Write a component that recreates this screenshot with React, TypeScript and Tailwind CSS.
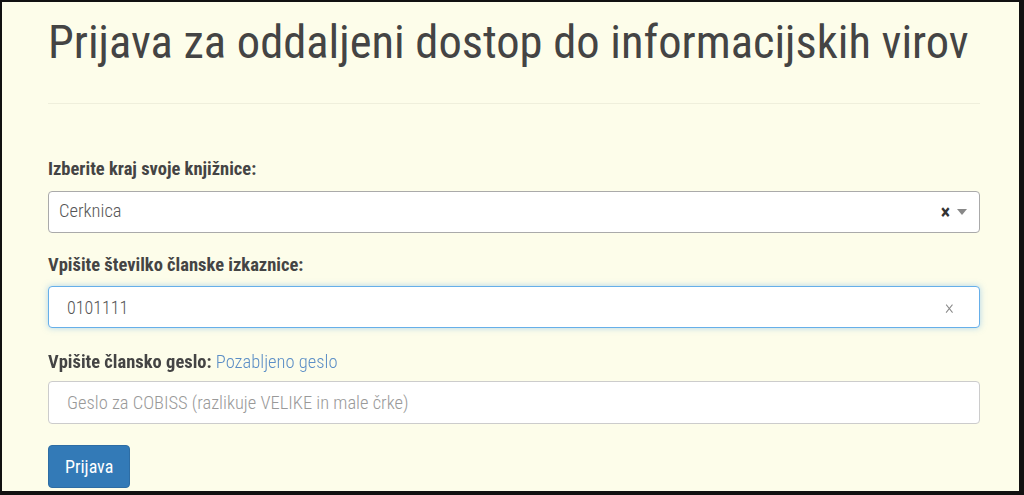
import { useState } from 'react';

const font = { fontFamily: '"Roboto Condensed", Roboto, "Liberation Sans", sans-serif' };

export default function App() {
  const [card, setCard] = useState('0101111');
  const [geslo, setGeslo] = useState('');

  return (
    <div
      className="w-[1024px] h-[495px] overflow-hidden bg-[#fdfdea] border-l-2 border-t-2 border-r-[5px] border-b-4 border-[#111] text-[#444]"
      style={font}
    >
      <div className="w-[932px] ml-[46px]">
        <h1 className="text-[46.5px] leading-[52px] pt-[14px] font-normal text-[#444] whitespace-nowrap">
          Prijava za oddaljeni dostop do informacijskih virov
        </h1>
        <hr className="mt-[35px] border-0 border-t border-[#efefdc]" />

        <form className="mt-[54px]" onSubmit={(e) => e.preventDefault()}>
          <label className="block text-[18.5px] leading-[22px] font-bold text-[#444]">Izberite kraj svoje knjižnice:</label>
          <div className="mt-[11px] h-[42px] flex items-center bg-white border border-[#aaa] rounded-[4px] pl-[10px] pr-[12px]">
            <span className="flex-1 text-[18.5px] text-[#555] font-light">Cerknica</span>
            <span className="text-[20px] font-bold text-[#333] leading-none">×</span>
            <span className="ml-[7px] w-0 h-0 border-l-[5px] border-r-[5px] border-t-[6px] border-l-transparent border-r-transparent border-t-[#888]" />
          </div>

          <label className="block mt-[21px] text-[18.5px] leading-[22px] font-bold text-[#444]">Vpišite številko članske izkaznice:</label>
          <div className="mt-[10px] h-[42px] flex items-center bg-white border border-[#66afe9] rounded-[4px] shadow-[0_0_6px_rgba(102,175,233,0.5)] pl-[18px] pr-[25px]">
            <input
              autoFocus
              value={card}
              onChange={(e) => setCard(e.target.value)}
              className="flex-1 bg-transparent outline-none text-[18px] text-[#555] font-light caret-black"
              style={font}
            />
            <span className="text-[#888] text-[20px] font-light leading-none">×</span>
          </div>

          <label className="block mt-[23px] text-[18.5px] leading-[22px] text-[#444]">
            <span className="font-bold">Vpišite člansko geslo:</span>{' '}
            <a href="#" className="text-[#5b8ec6] font-light">Pozabljeno geslo</a>
          </label>
          <input
            type="password"
            value={geslo}
            onChange={(e) => setGeslo(e.target.value)}
            placeholder="Geslo za COBISS (razlikuje VELIKE in male črke)"
            className="mt-[8px] block w-full h-[43px] bg-white border border-[#ccc] rounded-[4px] pl-[18px] text-[18.5px] text-[#555] font-light outline-none placeholder:text-[#999]"
            style={font}
          />

          <button
            type="submit"
            className="mt-[21px] h-[43px] px-[16px] rounded-[4px] bg-[#337ab7] border border-[#2e6da4] text-white text-[18px]"
            style={font}
          >
            Prijava
          </button>
        </form>
      </div>
    </div>
  );
}
